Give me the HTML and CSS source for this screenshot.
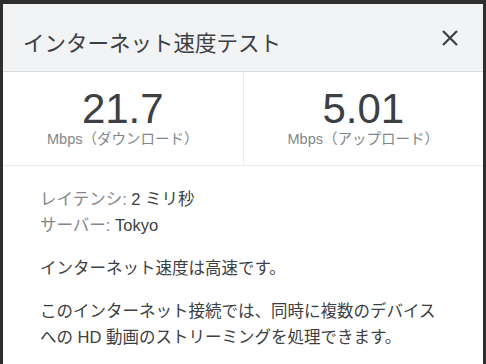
FILE: index.html
```html
<!DOCTYPE html>
<html lang="ja">
<head>
    <meta charset="UTF-8">
    <title>インターネット速度テスト</title>
    <link rel="stylesheet" href="styles.css">
</head>
<body>

    <div class="dialog">
        <!-- Header -->
        <div class="dialog-header">
            <h1>インターネット速度テスト</h1>
            <span class="close-btn">
                <svg width="18" height="18" viewBox="0 0 18 18">
                    <path d="M2 2 L16 16 M16 2 L2 16" stroke="#3c4043" stroke-width="2.2" fill="none"/>
                </svg>
            </span>
        </div>

        <!-- Speed results -->
        <div class="stats">
            <div class="stat">
                <div class="stat-value">21.7</div>
                <div class="stat-label">Mbps（ダウンロード）</div>
            </div>
            <div class="stat">
                <div class="stat-value">5.01</div>
                <div class="stat-label">Mbps（アップロード）</div>
            </div>
        </div>

        <!-- Details -->
        <div class="details">
            <div class="info">
                <div><span class="muted">レイテンシ:</span> 2 ミリ秒</div>
                <div><span class="muted">サーバー:</span> Tokyo</div>
            </div>
            <p>インターネット速度は高速です。</p>
            <p>このインターネット接続では、同時に複数のデバイスへの HD 動画のストリーミングを処理できます。</p>
        </div>
    </div>

</body>
</html>
```

FILE: styles.css
```css
body {
    margin: 0;
    background-color: #2e2e2e;
    font-family: "Liberation Sans", "Noto Sans CJK JP", sans-serif;
    color: #3c4043;
}
.dialog {
    margin: 4px 3px 0;
    height: 360px;
    background: #fff;
    overflow: hidden;
}
.dialog-header {
    display: flex;
    align-items: center;
    justify-content: space-between;
    height: 67px;
    padding: 0 24px 0 20px;
    background: #f1f3f4;
    border-bottom: 1px solid #dadce0;
}
.dialog-header h1 {
    margin: 0;
    font-size: 21.5px;
    font-weight: 400;
    color: #3c4043;
    padding-top: 8px;
}
.close-btn {
    display: flex;
}
.stats {
    display: flex;
    border-bottom: 1px solid #e8eaed;
}
.stat {
    flex: 1;
    text-align: center;
    padding: 16px 0 18px;
}
.stat + .stat {
    border-left: 1px solid #e8eaed;
}
.stat-value {
    font-size: 42px;
    line-height: 42px;
    color: #3c4043;
}
.stat-label {
    margin-top: 1px;
    font-size: 14.5px;
    line-height: 16px;
    color: #80868b;
}
.details {
    padding: 20px 37px 0;
    font-size: 16.5px;
    line-height: 26px;
}
.muted {
    color: #80868b;
}
.details p {
    margin: 17px 0 0;
}
```
